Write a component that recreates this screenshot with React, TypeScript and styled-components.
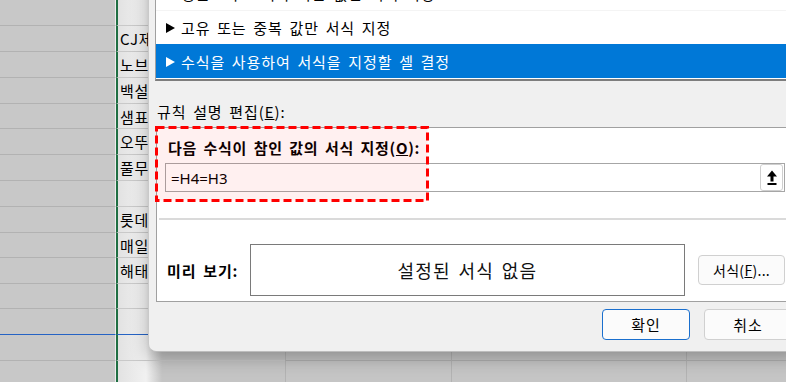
import React from "react";
import styled, { createGlobalStyle } from "styled-components";

const GlobalStyle = createGlobalStyle`
  html, body {
    margin: 0;
    padding: 0;
    width: 786px;
    height: 382px;
    overflow: hidden;
    background: #c8c8c8;
    font-family: "Noto Sans CJK KR", "Noto Sans", sans-serif;
  }
  * {
    box-sizing: border-box;
  }
`;

const rowHeights = [26, 26, 26, 26, 25, 26, 26, 26, 26, 25, 26, 25, 26, 26, 26];
const brands: Record<number, string> = {
  1: "CJ제일제당",
  2: "노브랜드",
  3: "백설",
  4: "샘표",
  5: "오뚜기",
  6: "풀무원",
  8: "롯데",
  9: "매일유업",
  10: "해태",
};

const UploadIcon = () => (
  <svg width="10" height="16" viewBox="0 0 10 16">
    <polygon points="0,6.5 5,0.5 10,6.5" fill="#000" />
    <rect x="3.5" y="6" width="3" height="5.5" fill="#000" />
    <rect x="0.5" y="13" width="9" height="2" fill="#000" />
  </svg>
);

const App = () => {
  return (
    <Screen>
      <GlobalStyle />
      <Sheet>
        {rowHeights.map((h, i) => (
          <SheetRow key={i} h={h}>
            <CellA accent={i === 12} />
            <CellB accent={i === 12}>{brands[i] || ""}</CellB>
            <CellRest w={166} />
            <CellRest w={235} />
            <CellRest w={200} />
          </SheetRow>
        ))}
      </Sheet>

      <Dialog>
        <RuleList>
          <RuleItem>
            <Arrow />
            평균보다 크거나 작은 값만 서식 지정
          </RuleItem>
          <RuleItem>
            <Arrow />
            고유 또는 중복 값만 서식 지정
          </RuleItem>
          <RuleItem selected>
            <Arrow />
            수식을 사용하여 서식을 지정할 셀 결정
          </RuleItem>
        </RuleList>

        <SectionLabel>
          규칙 설명 편집(<u>E</u>):
        </SectionLabel>

        <DescBox>
          <FieldLabel>
            다음 수식이 참인 값의 서식 지정(<u>O</u>):
          </FieldLabel>
          <FormulaInput>
            <FormulaText>=H4=H3</FormulaText>
            <CollapseButton>
              <UploadIcon />
            </CollapseButton>
          </FormulaInput>

          <Separator />

          <PreviewRow>
            <PreviewLabel>미리 보기:</PreviewLabel>
            <PreviewBox>설정된 서식 없음</PreviewBox>
            <FormatButton>
              서식(<u>F</u>)...
            </FormatButton>
          </PreviewRow>

          <Highlight>
            <svg width="274" height="76" viewBox="0 0 274 76">
              <rect
                x="1.5"
                y="1.5"
                width="271"
                height="73"
                fill="rgba(255,0,0,0.06)"
                stroke="#ff0000"
                strokeWidth="3"
                strokeDasharray="8 4"
              />
            </svg>
          </Highlight>
        </DescBox>

        <ButtonRow>
          <DialogButton primary>확인</DialogButton>
          <DialogButton>취소</DialogButton>
        </ButtonRow>
      </Dialog>
    </Screen>
  );
};

export default App;

const Screen = styled.div`
  position: relative;
  width: 786px;
  height: 382px;
  overflow: hidden;
`;

const Sheet = styled.div`
  display: flex;
  flex-direction: column;
`;

const SheetRow = styled.div<{ h: number }>`
  display: flex;
  height: ${(p) => p.h}px;
`;

const CellA = styled.div<{ accent?: boolean }>`
  width: 116px;
  flex-shrink: 0;
  background: #c8c8c8;
  border-right: 1px solid #ececec;
  border-bottom: 1px solid ${(p) => (p.accent ? "#2563c4" : "#b2b2b2")};
`;

const CellB = styled.div<{ accent?: boolean }>`
  width: 169px;
  flex-shrink: 0;
  display: flex;
  align-items: center;
  padding-left: 2px;
  overflow: hidden;
  white-space: nowrap;
  font-size: 15px;
  letter-spacing: 0.6px;
  color: #000;
  border-left: 2px solid #1f6f43;
  background: linear-gradient(to right, #e2e2e2 0, #f1f1f1 28px, #c4c4c4 44px);
  border-bottom: 1px solid ${(p) => (p.accent ? "#2563c4" : "#c9c9c9")};
`;

const CellRest = styled.div<{ w: number }>`
  width: ${(p) => p.w}px;
  flex-shrink: 0;
  background: #c5c5c5;
  border-left: 1px solid #b3b3b3;
  border-bottom: 1px solid #b0b0b0;
`;

const Dialog = styled.div`
  position: absolute;
  left: 148px;
  top: -32px;
  width: 652px;
  height: 384px;
  background: #f0f0f0;
  border-left: 1px solid #c9c9c9;
  border-bottom: 1px solid #bdbdbd;
  border-bottom-left-radius: 8px;
  box-shadow: 0 6px 18px rgba(0, 0, 0, 0.28);
  padding: 7px 6px 0 6px;
  display: flex;
  flex-direction: column;
  color: #000;
  letter-spacing: 0.9px;
  word-spacing: 2.5px;
`;

const RuleList = styled.div`
  background: #fff;
  border: 1px solid #a0a0a0;
  border-bottom: 2px solid #7d7d7d;
  padding-bottom: 1px;
  display: flex;
  flex-direction: column;
`;

const RuleItem = styled.div<{ selected?: boolean }>`
  height: 34px;
  display: flex;
  align-items: center;
  padding-left: 10px;
  font-size: 15px;
  white-space: nowrap;
  background: ${(p) => (p.selected ? "#0078d7" : "#fff")};
  color: ${(p) => (p.selected ? "#fff" : "#000")};
  border-top: 1px solid ${(p) => (p.selected ? "#0078d7" : "#f4f4f4")};
`;

const Arrow = styled.span`
  width: 0;
  height: 0;
  flex-shrink: 0;
  margin-right: 6px;
  border-left: 9px solid currentColor;
  border-top: 5px solid transparent;
  border-bottom: 5px solid transparent;
`;

const SectionLabel = styled.div`
  margin-top: 21px;
  height: 20px;
  line-height: 20px;
  padding-left: 2px;
  font-size: 15px;
`;

const DescBox = styled.div`
  position: relative;
  margin-top: 5px;
  margin-left: 1px;
  background: #fff;
  border: 1px solid #a0a0a0;
  padding: 10px 8px 5px 8px;
  display: flex;
  flex-direction: column;
`;

const FieldLabel = styled.div`
  height: 20px;
  line-height: 20px;
  padding-left: 3px;
  font-size: 15px;
  font-weight: 700;
  letter-spacing: 0.7px;
  white-space: nowrap;
`;

const FormulaInput = styled.div`
  margin-top: 5px;
  height: 29px;
  border: 1px solid #a6a6a6;
  display: flex;
  align-items: center;
  justify-content: space-between;
  padding: 0 1px 0 5px;
`;

const FormulaText = styled.span`
  font-family: "Noto Sans", sans-serif;
  font-size: 15px;
  letter-spacing: 0;
`;

const CollapseButton = styled.div`
  width: 23px;
  height: 27px;
  border: 1px solid #cfcfcf;
  border-radius: 3px;
  background: #fff;
  display: flex;
  align-items: center;
  justify-content: center;
`;

const Separator = styled.div`
  margin: 26px -7px 0 -6px;
  height: 2px;
  background: #dadada;
`;

const PreviewRow = styled.div`
  margin-top: 24px;
  display: flex;
  align-items: center;
  gap: 13px;
  padding-left: 2px;
`;

const PreviewLabel = styled.div`
  width: 70px;
  font-size: 15px;
  font-weight: 700;
  white-space: nowrap;
`;

const PreviewBox = styled.div`
  flex: 1;
  height: 52px;
  border: 1px solid #7a7a7a;
  display: flex;
  align-items: center;
  justify-content: center;
  font-size: 18px;
  letter-spacing: 1.2px;
  color: #111;
`;

const FormatButton = styled.div`
  width: 87px;
  height: 30px;
  border: 1px solid #d0d0d0;
  border-radius: 4px;
  background: #fbfbfb;
  display: flex;
  align-items: center;
  justify-content: center;
  font-size: 14px;
  letter-spacing: 0.3px;
`;

const Highlight = styled.div`
  position: absolute;
  left: -2px;
  top: -2px;
  width: 274px;
  height: 76px;
  pointer-events: none;
  svg {
    display: block;
  }
`;

const ButtonRow = styled.div`
  margin-top: 7px;
  display: flex;
  justify-content: flex-end;
  gap: 14px;
  padding-right: 2px;
`;

const DialogButton = styled.div<{ primary?: boolean }>`
  width: 88px;
  height: 31px;
  border: 1px solid ${(p) => (p.primary ? "#1a6fce" : "#d0d0d0")};
  border-radius: 4px;
  background: #fbfbfb;
  display: flex;
  align-items: center;
  justify-content: center;
  font-size: 15px;
`;
